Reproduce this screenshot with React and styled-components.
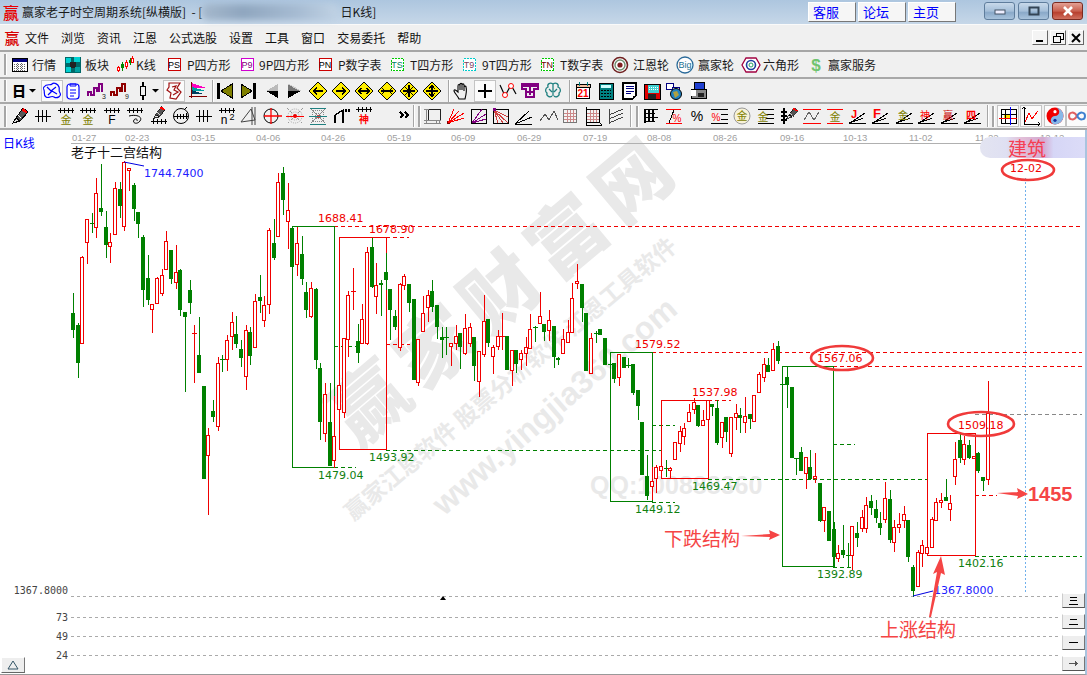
import React from 'react';
import styled, { createGlobalStyle } from 'styled-components';

const Global = createGlobalStyle`
  html, body { margin: 0; padding: 0; background: #fff; overflow: hidden; }
  #root { width: 1087px; height: 675px; }
`;
const CJK = '"Noto Sans CJK SC", "Liberation Sans", sans-serif';

const Page = styled.div`
  width: 1087px; height: 675px; display: flex; flex-direction: column; overflow: hidden;
  font-family: ${CJK}; font-size: 12px; color: #111;
`;
const TitleBar = styled.header`
  height: 24px; flex: none; display: flex; align-items: center; padding: 0 2px;
  background: linear-gradient(180deg, #adc6df 0%, #c6d7e8 100%);
`;
const Logo = styled.span`
  width: 18px; flex: none; color: #e80000; font-size: 16px; line-height: 18px; font-weight: 500; text-align: center;
`;
const TitleText = styled.span`
  font-size: 12px; line-height: 18px; color: #1a1a1a; white-space: pre; margin-left: 2px;
`;
const Smudge = styled.span`
  width: 136px; height: 16px; flex: none; filter: blur(3px); border-radius: 7px;
  background: linear-gradient(90deg, #a5b8cc, #8fa6bf 30%, #a6bbd2 70%, #c0d2e4);
`;
const LinkGroup = styled.nav`
  margin-left: auto; display: flex; gap: 2px; margin-right: 28px;
`;
const LinkBtn = styled.a`
  width: 48px; height: 20px; box-sizing: border-box; padding-left: 4px; line-height: 18px;
  color: #0000ff; font-size: 13px; background: #f6f6f6;
  border: 1px solid; border-color: #fff #777 #777 #fff;
`;
const WinGroup = styled.div`
  display: flex; gap: 3px; margin-right: 2px; margin-top: -3px;
`;
const WinBtn = styled.button`
  width: 31px; height: 18px; padding: 0; display: flex; align-items: center; justify-content: center;
  border: 1px solid ${p => (p.$close ? '#7a2a20' : '#5f7d9c')}; border-radius: 3px;
  background: ${p => (p.$close
    ? 'linear-gradient(180deg,#e3a094 0%,#c9604f 50%,#b8402f 60%,#d0705f 100%)'
    : 'linear-gradient(180deg,#c8d9ea 0%,#a5bfd9 50%,#8aa9c9 60%,#a9c3dc 100%)')};
`;
const MenuBar = styled.div`
  height: 28px; flex: none; box-sizing: border-box; display: flex; align-items: center; padding-left: 3px;
  background: #f0f0f0; border-top: 1px solid #fafafa; border-bottom: 2px solid #a6a6a6;
`;
const MenuLogo = styled(Logo)` font-size: 15px; color: #d80000; margin-right: 4px; `;
const MenuItems = styled.div` display: flex; gap: 12px; `;
const MenuItem = styled.span` font-size: 12px; line-height: 16px; color: #111; `;
const MdiGroup = styled.div` margin-left: auto; display: flex; gap: 2px; margin-right: 3px; `;
const MdiBtn = styled.span`
  width: 16px; height: 15px; box-sizing: border-box; display: flex; align-items: center; justify-content: center;
  background: #f4f4f4; border: 1px solid; border-color: #fff #666 #666 #fff;
`;
const ToolRow = styled.div`
  height: ${p => p.$h}px; flex: none; box-sizing: border-box; display: flex; align-items: center; padding-left: 4px;
  background: #f0f0f0; border-bottom: 2px solid #a8a8a8; overflow: hidden;
`;
const Grip = styled.span`
  width: 2px; height: 21px; flex: none; background: #a6a6a6; border-right: 1px solid #fff;
  margin-left: ${p => p.$gap || 0}px;
`;
const Sep = styled.span`
  width: 1px; height: ${p => p.$h || 22}px; flex: none; background: #a6a6a6; border-right: 1px solid #fff;
  margin-left: ${p => p.$gap || 0}px;
`;
const Tool = styled.span`
  width: ${p => p.$w}px; height: 22px; flex: none; box-sizing: border-box; display: flex; align-items: center; justify-content: center;
  margin-left: ${p => p.$gap || 0}px;
  ${p => (p.$on ? 'background: #fbfbfb; border: 1px solid #c4c4c4;' : '')}
`;
const LabelTool = styled.span`
  width: ${p => p.$w}px; flex: none; display: flex; align-items: center; white-space: nowrap;
  margin-left: ${p => p.$gap || 0}px;
`;
const ToolText = styled.span`
  margin-left: ${p => p.$m}px; font-size: 12px; line-height: 16px; color: #1a1a1a;
`;
const ChartWrap = styled.main`
  position: relative; flex: 1; min-height: 0; box-sizing: border-box; background: #fff;
  border-right: 2px solid #a9c4df; border-bottom: 1px solid #999;
`;
const Canvas = styled.svg` display: block; `;
const PeriodTag = styled.span`
  position: absolute; left: 3px; top: 5px; color: #0000ff; font-size: 12px; line-height: 16px;
`;
const StudyTitle = styled.span`
  position: absolute; left: 71px; top: 13px; color: #111; font-size: 13px; line-height: 18px;
`;
const PenNote = styled.span`
  position: absolute; left: 980px; top: 7px; width: 105px; height: 21px; box-sizing: border-box; padding-left: 28px;
  border-radius: 10px 0 0 10px; color: #f53e52; font-size: 19px; line-height: 21px;
  background: linear-gradient(90deg, #e3e4f1 0%, #dfe0f2 25%, #e2bfd8 40%, #d3a9d0 60%, #d6d6f6 70%, #dcdcf8 100%);
`;
const ScaleColumn = styled.div`
  position: absolute; right: 0; top: 463px; width: 23px; display: flex; flex-direction: column; gap: 6px;
`;
const ScaleBtn = styled.span`
  height: 15px; box-sizing: border-box; display: flex; align-items: center; justify-content: center;
  background: #eeeeee; border: 1px solid; border-color: #fff #777 #555 #ccc;
`;
const TabToggle = styled.span`
  position: absolute; left: 1px; bottom: 1px; width: 24px; height: 16px; box-sizing: border-box;
  display: flex; align-items: center; justify-content: center;
  background: #eee; border: 1px solid; border-color: #fff #777 #666 #fff;
`;
const Label = styled.text`
  font-family: "DejaVu Sans", sans-serif; font-size: 11px; fill: ${p => p.$c};
`;
const AxisDate = styled.text`
  font-family: "Liberation Sans", sans-serif; font-size: 9.5px; fill: #a0a0a0;
`;
const ScaleText = styled.text`
  font-family: "DejaVu Sans Mono", monospace; font-size: 10px; fill: #444; text-anchor: end;
`;
const Note = styled.text`
  font-family: ${CJK}; font-size: 19px; fill: #f54545;
`;
const BigFigure = styled.text`
  font-family: "Liberation Sans", sans-serif; font-size: 20px; font-weight: 700; fill: #f54545;
`;
const WaterBig = styled.text`
  font-family: ${CJK}; font-weight: 900; font-size: 76px; fill: #e9e9e9;
`;
const WaterSmall = styled.text`
  font-family: ${p => (p.$latin ? '"Liberation Sans", sans-serif' : CJK)};
  font-weight: 700; font-size: ${p => p.$s}px; fill: #e9e9e9;
`;
const IconSvg = styled.svg` display: block; flex: none; `;
const IconText = styled.text`
  font-family: ${p => (p.$latin ? '"Liberation Sans", sans-serif' : CJK)};
  font-size: ${p => p.$s}px; font-weight: ${p => p.$b || 400}; fill: ${p => p.$c}; text-anchor: middle;
`;

/* ---------- icon drawing helpers ---------- */
const L = ({ p, c = '#000', w = 1, d }) => <path d={p} stroke={c} strokeWidth={w} fill="none" strokeDasharray={d} />;
const T = ({ x = 10, y = 14, s = 10, c = '#000', b, latin, t }) => <IconText x={x} y={y} $s={s} $c={c} $b={b} $latin={latin}>{t}</IconText>;
const Ticks = ({ y = 4, x0 = 2, x1 = 18, xs = [4, 8, 12, 16], len = 5, c = '#000' }) => (
  <L c={c} p={`M${x0} ${y + 2.5}H${x1} ${xs.map(x => `M${x + .5} ${y}v${len}`).join(' ')}`} />
);
const Fan = ({ c = '#000' }) => <L c={c} p="M1 17.5H18 M2 17L17 7 M1 17L15 12.5" />;
const Diamond = ({ children }) => (
  <>
    <path d="M10 1L19 10L10 19L1 10Z" fill="#ffee00" stroke="#000" strokeWidth="1" />
    {children}
  </>
);
const Web = ({ c = '#d04040', l = '#888' }) => (
  <>
    <L c={l} p="M3 3L17 17M17 3L3 17" />
    <rect x="4.5" y="4.5" width="11" height="11" fill="none" stroke={l} strokeDasharray="1 1" />
    <rect x="7.5" y="7.5" width="5" height="5" fill="none" stroke={l} strokeDasharray="1 1" />
    <rect x="9" y="9" width="3" height="3" fill={c} />
  </>
);
const Crayon = () => (
  <>
    <path d="M6 12L13 2L18 6L10 15Z" fill="#555" stroke="#000" />
    <path d="M13 2L18 6L16 7L11 4Z" fill="#f00" />
    <path d="M6 12L3 17L10 15Z" fill="#ddd" stroke="#000" />
    <path d="M7 8L11 12" stroke="#fff" />
  </>
);

const ICONS = {
  table: <><rect x="2.5" y="3.5" width="15" height="13" fill="#fff" stroke="#000" /><rect x="3" y="4" width="14" height="3" fill="#000080" /><L c="#666" d="1 1" p="M4 9.5H16M4 11.5H16M4 13.5H16M4 15H16M7.5 8V16M11.5 8V16" /></>,
  blocks: <><rect x="2" y="2" width="16" height="16" fill="#006868" /><rect x="3" y="3" width="5" height="5" fill="#00d0d0" /><rect x="11" y="2" width="6" height="5" fill="#00d0d0" /><rect x="7" y="7" width="6" height="6" fill="#222" /><rect x="3" y="12" width="5" height="5" fill="#00d0d0" /><rect x="12" y="12" width="5" height="5" fill="#00a0a0" /></>,
  kline: <><L c="#f00" p="M3.5 11v6M11.5 5v9M17.5 1v7" /><rect x="2.5" y="12.5" width="2" height="3" fill="#fff" stroke="#f00" /><rect x="6" y="9" width="3" height="4" fill="#080" /><L c="#080" p="M7.5 7v9" /><rect x="10.5" y="7.5" width="2" height="4" fill="#fff" stroke="#f00" /><rect x="14" y="5" width="3" height="3" fill="#080" /><L c="#080" p="M15.5 3v7" /><rect x="16.5" y="3.5" width="2" height="4" fill="#fff" stroke="#f00" /></>,
  ps: <><rect x="4.5" y="3.5" width="12" height="12" fill="#fff" stroke="#c00" /><T y={13} s={9} latin t="PS" /></>,
  p9: <><rect x="4.5" y="3.5" width="12" height="12" fill="#fff" stroke="#d000d0" /><T y={13} s={9} c="#800080" latin t="P9" /></>,
  pn: <><rect x="4.5" y="3.5" width="12" height="12" fill="#fff" stroke="#c00" /><T y={13} s={9} latin t="PN" /></>,
  ts: <><rect x="4.5" y="3.5" width="12" height="12" fill="#fff" stroke="#0c0" strokeDasharray="2 1" /><T y={13} s={9} c="#008060" latin t="TS" /></>,
  t9: <><rect x="4.5" y="3.5" width="12" height="12" fill="#fff" stroke="#0cc" strokeDasharray="2 1" /><T y={13} s={9} c="#804060" latin t="T9" /></>,
  tn: <><rect x="4.5" y="3.5" width="12" height="12" fill="#fff" stroke="#0c0" strokeDasharray="2 1" /><T y={13} s={9} c="#700000" latin t="TN" /></>,
  wheel: <g shapeRendering="geometricPrecision"><circle cx="10" cy="10" r="7.5" fill="#fff" stroke="#702020" strokeWidth="1.6" /><circle cx="10" cy="10" r="5" fill="none" stroke="#709070" strokeWidth="1.4" /><circle cx="10" cy="10" r="2.6" fill="#802020" /></g>,
  big: <g shapeRendering="geometricPrecision"><circle cx="10" cy="10" r="8" fill="#fff" stroke="#2a6a9a" strokeWidth="1.3" /><T y={13} s={9} c="#207090" latin t="Big" /></g>,
  hex: <g shapeRendering="geometricPrecision"><path d="M5 3H15L19 10L15 17H5L1 10Z" fill="#fff" stroke="#a00040" strokeWidth="1.3" /><circle cx="10" cy="10" r="4.5" fill="none" stroke="#2040a0" strokeWidth="1.6" /><circle cx="10" cy="10" r="2" fill="none" stroke="#20a060" /></g>,
  dollar: <T y={16} s={17} b={900} c="#6fc46f" latin t="$" />,
  day: <T y={15} s={14} b={900} t="日" />,
  net: <g shapeRendering="geometricPrecision"><L c="#0000ff" w={1.2} p="M2 6C5 2 8 5 10 3S16 3 17 6S16 9 18 12S15 18 12 16S7 18 4 16S3 11 2 9S1 7 2 6ZM5 6L9 10L14 6M6 14L10 10L15 13" /></g>,
  clip: <g shapeRendering="geometricPrecision"><rect x="4" y="3" width="12" height="15" rx="3" fill="#fff" stroke="#0000ff" strokeWidth="1.2" /><L c="#0000ff" p="M7 3h6v2H7ZM7 9H13M7 12H13M7 15H11" /></g>,
  w3: <><L c="#800080" w={1.4} p="M1 15V11H4V14H7V7H10V10H12V3H15V11" /><T x={17} y={18} s={7} c="#222" latin t="3" /></>,
  w9: <><L c="#900000" w={1.4} p="M1 15V11H4V14H7V7H10V10H12V3H15V11" /><T x={17} y={18} s={7} c="#222" latin t="9" /></>,
  candle: <L w={1.3} p="M10 1V5M7.5 5.5H12.5V14.5H7.5ZM10 15V19" />,
  net2: <g shapeRendering="geometricPrecision"><L c="#a01010" w={1.2} p="M5 2H16L13 7L17 11L12 18L6 17L7 12L3 9L5 6ZM8 6L12 5L10 9L14 11L9 14" /></g>,
  flag: <><path d="M4 2L18 7H4Z" fill="#ff00c0" /><path d="M4 6L18 10H4Z" fill="#00a0a0" /><path d="M4 9L15 13H4Z" fill="#004060" /><L c="#800000" p="M3.5 1V17M1 15.5H19" /></>,
  first: <><rect x="2" y="2" width="3" height="16" fill="#000" /><path d="M17 3V17L6 10Z" fill="#808000" stroke="#000" /></>,
  last: <><rect x="15" y="2" width="3" height="16" fill="#000" /><path d="M3 3V17L14 10Z" fill="#808000" stroke="#000" /></>,
  left: <><path d="M17 3V10H5Z" fill="#bbb" /><path d="M17 10V17L5 10Z" fill="#000" /></>,
  right: <><path d="M3 3V10H16Z" fill="#777" /><path d="M3 10V17L16 10Z" fill="#000" /><path d="M3 3L16 10" stroke="#ccc" /></>,
  dL: <Diamond><L p="M5 10H15M5.5 10L9 6.5M5.5 10L9 13.5" w={1.3} /></Diamond>,
  dR: <Diamond><L p="M5 10H15M14.5 10L11 6.5M14.5 10L11 13.5" w={1.3} /></Diamond>,
  dLR: <Diamond><L p="M4 10H16M4.5 10L8 7M4.5 10L8 13M15.5 10L12 7M15.5 10L12 13" w={1.3} /></Diamond>,
  dX: <Diamond><L p="M4 10H16M8 10L5 7M8 10L5 13M12 10L15 7M12 10L15 13" w={1.3} /></Diamond>,
  dAll: <Diamond><L p="M4 10H16M10 4V16M6 6L14 14M14 6L6 14" w={1.2} /></Diamond>,
  dUD: <Diamond><L p="M4 10H16M10 4V16M10 4.5L7 8M10 4.5L13 8M10 15.5L7 12M10 15.5L13 12" w={1.2} /></Diamond>,
  hand: <g shapeRendering="geometricPrecision"><L w={1.1} p="M7 18C6 15 3 13 2 10C2 8 4 9 6 11V5C6 3 8 3 8 5V9V3.5C8 2 10 2 10 3.5V9V4C10 2.5 12 2.5 12 4V10V6C12 4.8 14 4.8 14 6C15 9 14 14 13 18Z" /></g>,
  cross: <L w={1.2} p="M10 3V17M3 10H17" />,
  vn: <g shapeRendering="geometricPrecision"><L w={1.2} p="M2 4L7 15L13 4L18 13" /><circle cx="7" cy="14" r="2.5" stroke="#f00" fill="#fff" /><circle cx="13" cy="5" r="2.5" stroke="#f00" fill="#fff" /></g>,
  gift: <L c="#800080" w={1.6} p="M2 3H18V8H14V16H6V8H2ZM2 5H18M10 5V14M7 11H13" />,
  brain: <g shapeRendering="geometricPrecision"><L c="#208080" w={1.3} p="M10 3C7 1 4 3 5 6C2 7 2 11 4 12C3 15 7 17 9 15M10 3C13 1 16 3 15 6C18 7 18 11 16 12C17 15 13 17 11 15M10 3V15M6 8L9 11M14 8L11 11" /></g>,
  cal: <><rect x="3.5" y="4.5" width="13" height="13" fill="#fff" stroke="#000" /><rect x="3" y="3" width="14" height="3" fill="#f8c0a0" stroke="#000" /><L c="#008080" p="M6 1V5M14 1V5" /><T y={16} s={10} c="#f00" latin b={700} t="21" /></>,
  calc: <><rect x="3" y="2" width="14" height="16" fill="#008080" stroke="#000" /><rect x="5" y="4" width="10" height="3" fill="#cff" /><L c="#000" d="2 1" p="M5 9.5H15M5 12.5H15M5 15.5H15" /></>,
  book: <><path d="M4 2H17V15L14 18H4Z" fill="#fff" stroke="#000" strokeWidth="1.4" /><L c="#000080" p="M7 5H15M7 7.5H15M7 10H15M7 12.5H12" /><L c="#000" p="M14 18V15H17" /></>,
  floppy: <><rect x="2" y="3" width="16" height="15" fill="#e00000" stroke="#000" /><rect x="6" y="4" width="11" height="8" fill="#40d0d0" /><rect x="6" y="13" width="8" height="5" fill="#222" /><L c="#fff" d="1 1" p="M7 6H16M7 8H16" /></>,
  globe: <><rect x="2" y="2" width="7" height="6" fill="#fff" stroke="#000080" /><rect x="8" y="6" width="7" height="5" fill="#fff" stroke="#000080" /><g shapeRendering="geometricPrecision"><circle cx="12" cy="13" r="5.5" fill="#2080c0" stroke="#000" /><path d="M9 11L13 10L15 14L11 17Z" fill="#b0a040" /></g></>,
  print: <><rect x="6" y="1" width="10" height="9" fill="#2040d0" stroke="#000" /><rect x="3" y="8" width="15" height="9" fill="#888" stroke="#000" /><rect x="3" y="9" width="5" height="6" fill="#fff" /><rect x="10" y="12" width="6" height="4" fill="#222" /></>,
  pen: <Crayon />,
  t4: <L p="M2 10.5H18M5.5 4V16M9.5 4V16M13.5 4V16" />,
  tGold: <><Ticks y={2} /><T y={18} s={11} c="#808000" t="金" /></>,
  tGold2: <><Ticks y={2} /><T y={18} s={11} c="#808000" t="金" /></>,
  tF: <><Ticks y={2} /><T y={18} s={12} latin t="F" /></>,
  tSpiral: <><Ticks y={2} /><g shapeRendering="geometricPrecision"><L p="M4 10C12 8 18 11 15 15C12 19 7 17 9 14C10 12 13 13 12 15" /></g></>,
  penT: <><g transform="translate(2 -1) scale(.8)"><Crayon /></g><Ticks y={13} /></>,
  tCircle: <g shapeRendering="geometricPrecision"><circle cx="10" cy="10" r="7.5" fill="none" stroke="#000" /><L p="M3 10.5H17M6.5 8V13M9.5 8V13M12.5 8V13M15.5 7V13M13 4L16 1" /></g>,
  tN2: <><Ticks y={2} /><T x={7} y={18} s={12} latin t="n" /><T x={15} y={14} s={9} latin t="2" /></>,
  tri: <g shapeRendering="geometricPrecision"><L c="#444" p="M2 16L12 3L16 14ZM13 1V19M16 1V19" /></g>,
  crossC: <g shapeRendering="geometricPrecision"><circle cx="8" cy="10" r="7" fill="none" stroke="#000" /><L c="#f00" w={1.3} p="M1 10H19M8 2V18" /></g>,
  web: <><L c="#999" d="1 1" p="M2 2L18 18M18 2L2 18" /><g shapeRendering="geometricPrecision"><circle cx="10" cy="10" r="7" fill="none" stroke="#aaa" strokeDasharray="1 1" /><circle cx="10" cy="10" r="4" fill="none" stroke="#aaa" strokeDasharray="1 1" /><circle cx="10" cy="10" r="2" fill="#e00000" /></g><L c="#f00" p="M1 10H19" /></>,
  webBox: <><Web /><L c="#208080" p="M2 2H18M2 18H18M1 10H19" /></>,
  nq: <L w={1.3} p="M3 17V9L11 4V17M14 3V6M17 3V6" />,
  tShen: <><Ticks y={1} /><T y={17} s={10} c="#f00" b={700} t="神" /></>,
  more: <L w={1.6} p="M6 6L9 9L6 12M11 6L14 9L11 12" />,
  boxL: <><rect x="5.5" y="3.5" width="12" height="11" fill="none" stroke="#222" /><L c="#888" p="M1 3.5H6M1 14.5H18M3.5 3V18M13.5 14V18M16.5 14V18M1 17.5H18" /></>,
  fanR: <><rect x="1" y="15" width="3" height="3" fill="#800000" /><L c="#f00" p="M2 17L8 3M2 17L13 5M2 17L18 7M2 17L18 12" /></>,
  boxP: <><rect x="2.5" y="3.5" width="15" height="14" fill="none" stroke="#000" /><L c="#800080" p="M3 17L13 3M3 17L17 8M3 17L17 13M3 15L8 15" /></>,
  boxR: <><rect x="2.5" y="3.5" width="15" height="14" fill="none" stroke="#000" /><L c="#d04040" p="M3 4L17 17M3 4L12 17M3 4L17 11M3 4L7 17" /><rect x="2" y="2" width="3" height="3" fill="#800080" /></>,
  fanK: <L w={1} p="M1 18H18M1 18L15 5M1 18L18 11" />,
  wave: <L c="#555" p="M1 15L6 8L10 14L15 5L19 14" />,
  gridR: <><rect x="3.5" y="3.5" width="13" height="13" fill="#f4f4f4" stroke="#777" /><L c="#c88" p="M7 4V16M10 4V16M13 4V16M4 7H16M4 10H16M4 13H16" /></>,
  gridA: <><rect x="3.5" y="3.5" width="13" height="13" fill="#f4f4f4" stroke="#000" /><L c="#c88" p="M7 4V16M10 4V16M13 4V16M4 7H16M4 10H16M4 13H16" /><L p="M3 1V19H19M16 16L19 19" /></>,
  slant: <L c="#444" p="M3 3V18M3 9L17 3M3 13L17 7M3 17L17 11" />,
  tList: <L w={1.2} p="M4 3V17M3 3.5H17M3 7.5H14M3 11.5H17M3 15.5H14M8 3V16M12 3V16" />,
  pctLine: <><L c="#f00" p="M2 3.5H17M2 17.5H18" /><L p="M5 17L10 4" /><T x={13} y={16} s={10} c="#f00" latin t="%" /></>,
  pct: <T y={15} s={14} latin t="%" />,
  pctR: <><L p="M1 3.5H18M1 17.5H18M11 8H18M11 13H18" /><T x={6} y={15} s={10} c="#f00" latin t="%" /></>,
  goldC: <g shapeRendering="geometricPrecision"><circle cx="10" cy="10" r="8" fill="#f7f2d8" stroke="#999" /><T y={14} s={11} c="#808000" t="金" /></g>,
  goldL: <><L p="M2 3.5H18M10 8.5H18M10 12.5H18M2 17.5H18" /><T x={7} y={15} s={11} c="#808000" t="金" /></>,
  penL: <><L w={1.4} p="M5 2V18M2 6H8M2 10H8M2 14H8" /><g transform="translate(5 0) scale(.75)"><Crayon /></g></>,
  waveL: <><L c="#f00" p="M1 3.5H19M1 17.5H19" /><L c="#666" p="M2 14L7 6L12 14L17 6" /></>,
  goldR: <><L c="#f00" p="M2 3.5H18M2 17.5H18" /><T y={15} s={11} c="#808000" t="金" /></>,
  fJ: <><Fan /><T x={6} y={12} s={11} c="#f00" b={700} latin t="J" /></>,
  fF: <><Fan /><T x={6} y={12} s={13} c="#f00" b={900} latin t="F" /></>,
  fGold: <><Fan /><T x={8} y={13} s={10} c="#808000" t="金" /></>,
  fShen: <><Fan /><T x={8} y={13} s={10} c="#f00" t="神" /></>,
  fYing: <><Fan /><T x={8} y={13} s={10} c="#c00" t="赢" /></>,
  fSi: <><Fan /><T x={8} y={13} s={10} c="#f00" b={700} t="四" /></>,
  gridY: <><rect x="6" y="8" width="7" height="5" fill="#ffe000" /><L p="M3 3.5H18V17.5H3ZM3 8.5H18M7.5 3V18" /><L c="#f00" p="M1 12.5H19" /><L c="#00f" p="M12.5 1V19" /></>,
  chart: <><L p="M3 1V18H19M1 3L3 1L5 3M17 16L19 18L17 20" /><L c="#f00" p="M4 16L8 7L11 13L17 5" /></>,
  yin: <g shapeRendering="geometricPrecision"><circle cx="10" cy="10" r="8.5" fill="#f00000" /><path d="M10 1.5A8.5 8.5 0 0 1 10 18.5A4.25 4.25 0 0 1 10 10A4.25 4.25 0 0 0 10 1.5Z" fill="#88b8e8" /><circle cx="10" cy="5.7" r="1.6" fill="#fff" /><circle cx="10" cy="14.3" r="1.6" fill="#1030a0" /></g>,
  inf: <g shapeRendering="geometricPrecision"><L c="#e06060" w={2} p="M10 10C7 5 2 6 2 10S7 15 10 10" /><L c="#4080d0" w={2} p="M10 10C13 15 18 14 18 10S13 5 10 10" /></g>,
};
const Icon = ({ name }) => (
  <IconSvg width="20" height="20" viewBox="0 0 20 20" fill="none" shapeRendering="crispEdges">{ICONS[name]}</IconSvg>
);
const Caret = () => (
  <IconSvg width="8" height="4" viewBox="0 0 8 4"><path d="M0 0H7L3.5 3.5Z" fill="#000" /></IconSvg>
);

const ROW1 = [
  ['table', 19, '行情', 31], ['blocks', 72, '板块', 84], ['kline', 124, 'K线', 135], ['ps', 173, 'P四方形', 186],
  ['p9', 246, '9P四方形', 258], ['pn', 324, 'P数字表', 337], ['ts', 396, 'T四方形', 409], ['t9', 468, '9T四方形', 481],
  ['tn', 546, 'T数字表', 559], ['wheel', 619, '江恩轮', 632], ['big', 684, '赢家轮', 697], ['hex', 750, '六角形', 762],
  ['dollar', 815, '赢家服务', 827],
];
const ROW2 = [
  ['day', 18], ['drop', 32], ['net', 51, 1], ['clip', 72], ['w3', 96], ['w9', 119], ['candle', 142], ['drop', 155],
  ['net2', 173, 1], ['flag', 197], ['sep', 211], ['first', 224], ['last', 247], ['left', 270], ['right', 294], ['dL', 317],
  ['dR', 340], ['dLR', 363], ['dX', 386], ['dAll', 408], ['dUD', 431], ['sep', 447], ['hand', 461], ['cross', 484, 1],
  ['vn', 507], ['gift', 529], ['brain', 552], ['sep', 568], ['cal', 582], ['calc', 605], ['book', 628], ['floppy', 651],
  ['globe', 673], ['print', 697],
];
const ROW3 = [
  ['pen', 19], ['t4', 42], ['tGold', 65], ['tGold2', 87], ['tF', 111], ['tSpiral', 134], ['penT', 158], ['tCircle', 180],
  ['t4', 203], ['tN2', 226], ['tri', 248], ['crossC', 272], ['web', 294], ['webBox', 317], ['nq', 341], ['tShen', 363],
  ['more', 403], ['sep', 412], ['grip', 417], ['boxL', 431], ['fanR', 454], ['boxP', 477], ['boxR', 499], ['fanK', 522],
  ['wave', 547], ['gridR', 568], ['gridA', 591], ['slant', 614], ['sep', 628], ['grip', 634], ['tList', 648], ['pctLine', 671],
  ['pct', 694], ['pctR', 717], ['goldC', 739], ['goldL', 763], ['penL', 786], ['waveL', 809], ['goldR', 832], ['fJ', 855],
  ['fF', 878], ['fGold', 902], ['fShen', 924], ['fYing', 947], ['fSi', 970], ['sep', 984], ['grip', 989], ['gridY', 1004, 1],
  ['chart', 1027, 1], ['yin', 1051, 1], ['inf', 1073, 1],
];

function FlowRow({ items, h }) {
  let cursor = 6;
  return (
    <ToolRow $h={h}>
      <Grip />
      {items.map(([name, c, on], i) => {
        const w = name === 'sep' || name === 'grip' ? 2 : name === 'drop' ? 8 : 22;
        const left = name === 'sep' || name === 'grip' ? c : c - w / 2;
        const gap = Math.round(left - cursor);
        cursor = left + w;
        if (name === 'sep') return <Sep key={i} $gap={gap} />;
        if (name === 'grip') return <Grip key={i} $gap={gap} />;
        return <Tool key={i} $w={w} $gap={gap} $on={on}>{name === 'drop' ? <Caret /> : <Icon name={name} />}</Tool>;
      })}
    </ToolRow>
  );
}
function LabelRow({ items, h }) {
  return (
    <ToolRow $h={h}>
      <Grip />
      {items.map(([icon, c, text, tx], i) => {
        const next = items[i + 1] ? items[i + 1][1] : c + 100;
        return (
          <LabelTool key={icon} $w={next - c} $gap={i === 0 ? c - 10 - 6 : 0}>
            <Icon name={icon} />
            <ToolText $m={tx - (c + 10)}>{text}</ToolText>
          </LabelTool>
        );
      })}
    </ToolRow>
  );
}

/* ---------- chart data: [x, r/g, bodyTop, bodyBottom, wickTop, wickBottom] ---------- */
const R = 'r', G = 'g';
const CANDLES = [
  [73,G,313,330,293,338],[78,G,325,363,323,378],[82,R,257,343,256,343],[87,R,219,242,219,264],[92,G,223,224,213,233],
  [96,R,193,227,178,238],[101,G,208,212,164,216],[106,G,227,245,211,258],[110,R,242,246,233,263],[115,R,188,234,182,234],
  [120,G,189,206,182,218],[124,R,162,226,161,231],[129,R,168,170,168,191],[134,G,185,209,183,221],[138,G,212,224,212,238],
  [143,G,237,290,235,307],[148,G,278,300,255,305],[152,R,304,309,304,333],[157,R,278,303,277,303],[162,R,275,293,269,296],
  [166,R,241,269,231,269],[171,G,250,279,250,284],[176,R,272,282,245,289],[180,G,270,310,269,316],[185,G,312,317,312,392],
  [190,G,290,303,280,314],[194,R,333,334,325,383],[199,G,355,373,317,373],[204,G,386,479,386,479],[208,R,435,455,428,515],
  [213,G,411,417,400,422],[218,R,363,426,357,431],[222,G,359,360,355,372],[227,R,340,359,335,371],[232,R,322,336,312,350],
  [236,G,334,344,316,348],[241,G,349,358,340,367],[246,R,330,376,325,390],[250,G,332,356,327,365],[255,R,301,347,294,347],
  [260,G,297,301,275,313],[264,R,305,320,296,327],[269,R,230,304,228,314],[274,G,243,258,219,260],[278,R,182,236,173,236],
  [283,G,173,200,167,215],[288,R,210,221,183,249],[292,G,228,267,228,267],[297,R,243,264,227,276],[302,G,254,279,236,285],
  [306,G,292,310,282,318],[311,R,288,316,282,318],[316,G,289,360,288,369],[320,G,368,422,363,440],[325,R,394,433,383,442],
  [330,G,422,466,383,466],[334,R,436,460,396,468],[339,R,385,409,385,409],[344,R,338,412,338,418],[348,R,295,339,291,357],
  [353,R,291,292,268,310],[358,G,341,353,324,363],[362,R,319,343,304,343],[367,R,252,343,247,345],[372,G,247,287,238,288],
  [376,R,285,296,263,314],[381,G,283,285,280,316],[386,G,272,280,253,290],[390,G,289,310,289,340],[395,G,316,327,310,330],
  [400,R,284,347,283,351],[404,R,276,285,274,290],[409,G,284,303,284,312],[414,G,299,380,299,380],[418,R,339,382,339,386],
  [423,R,313,331,296,332],[428,R,295,307,290,322],[432,G,291,307,280,312],[437,G,305,327,305,339],[442,G,337,340,327,358],
  [446,G,337,338,327,355],[451,R,343,346,343,366],[456,R,336,343,325,350],[460,G,333,347,333,369],[465,R,328,353,314,355],
  [470,R,327,343,323,347],[474,G,337,366,337,381],[479,R,351,381,351,397],[484,R,321,354,295,357],[488,G,319,343,319,347],
  [493,R,347,356,345,374],[498,R,336,346,330,350],[502,R,336,337,313,350],[507,G,336,370,336,370],[512,R,350,370,350,386],
  [516,G,350,364,350,373],[521,R,353,359,350,370],[526,R,347,353,337,366],[530,R,329,348,314,348],[535,G,327,328,326,342],
  [540,R,316,323,292,323],[544,G,324,332,324,341],[549,R,320,330,310,341],[554,G,326,357,326,368],[558,G,358,360,357,365],
  [563,R,339,353,329,353],[568,R,332,342,320,342],[572,R,298,332,283,332],[577,R,281,283,264,289],[582,G,284,308,284,322],
  [586,G,313,371,313,371],[591,R,338,373,333,373],[596,G,333,334,331,343],[600,G,329,335,329,335],[605,G,338,365,338,365],
  [610,G,364,365,355,376],[614,G,363,379,363,383],[619,R,354,377,354,386],[624,G,357,368,357,368],[628,G,365,366,358,368],
  [633,G,364,393,364,395],[638,G,390,406,390,420],[642,G,422,475,422,475],[647,G,476,496,455,500],[652,R,481,486,467,500],
  [656,R,467,478,465,493],[661,R,466,470,465,478],[666,G,468,469,460,477],[670,R,468,470,467,478],[675,R,442,459,442,459],
  [680,R,431,443,426,452],[684,R,428,436,423,445],[689,R,412,421,404,421],[694,R,402,409,398,414],[698,G,405,426,405,427],
  [703,R,420,425,410,425],[708,R,400,419,400,419],[712,G,404,407,404,416],[717,G,408,443,400,445],[722,R,422,437,422,448],
  [726,G,417,432,417,442],[731,R,417,453,417,457],[736,R,413,417,404,430],[740,G,415,418,408,433],[745,R,416,422,397,433],
  [750,G,414,419,414,429],[754,R,395,421,395,421],[759,R,374,392,372,393],[764,R,364,377,358,382],[768,G,365,372,358,372],
  [773,R,349,370,343,370],[778,G,346,361,341,364],[782,G,384,385,367,395],[787,G,377,385,367,408],[792,G,387,458,387,458],
  [796,G,458,459,458,475],[801,G,452,471,447,471],[806,R,457,473,457,489],[810,G,467,479,450,480],[815,R,476,478,453,483],
  [820,G,483,521,483,522],[824,R,507,520,507,532],[829,G,511,541,511,541],[834,G,529,557,522,567],[838,R,553,558,545,562],
  [843,G,550,555,525,558],[848,G,555,556,543,568],[852,R,526,555,526,570],[857,G,533,538,522,547],[862,R,517,528,510,532],
  [866,R,505,528,497,533],[871,G,501,508,495,515],[876,G,509,518,500,523],[880,G,523,528,512,535],[885,R,498,519,482,523],
  [890,G,499,540,490,543],[894,R,527,542,520,552],[899,R,524,527,513,533],[904,R,514,520,506,528],[908,G,520,557,520,562],
  [913,G,567,591,565,597],[918,R,552,586,550,586],[922,R,545,553,540,567],[927,R,547,553,547,555],[932,R,519,547,517,547],
  [936,R,502,520,498,520],[941,R,500,502,493,508],[946,G,497,501,479,501],[950,R,503,509,495,521],[955,R,459,476,442,485],
  [960,G,440,458,433,463],[964,R,444,459,436,465],[969,G,445,458,440,459],[974,R,456,458,456,458],[978,G,453,471,452,473],
  [983,G,477,481,477,491],[988,R,413,479,381,485],
];
const BOXES = [
  [292.5, 226.5, 42, 241, '#008000'], [339.5, 237.5, 47, 212, '#f00000'], [610.5, 352.5, 42, 149, '#008000'],
  [661.5, 400.5, 47, 78, '#f00000'], [782.5, 366.5, 51, 200, '#008000'], [927.5, 433.5, 48, 122, '#f00000'],
];
const DASHES = [
  [334, 1082, 226, '#f00000'], [652, 1082, 352, '#f00000'], [833, 1082, 366, '#f00000'], [975, 1082, 414, '#888888'],
  [975, 1082, 556, '#008000'], [708, 927, 479, '#008000'], [386, 661, 450, '#008000'], [334, 360, 346, '#008000'],
  [334, 356, 467, '#008000'], [386, 409, 237, '#f00000'], [386, 410, 344, '#f00000'], [652, 675, 425, '#008000'],
  [652, 675, 502, '#008000'], [708, 731, 400, '#f00000'], [833, 855, 444, '#008000'], [833, 852, 567, '#008000'],
  [975, 997, 495, '#f00000'],
];
const LABELS = [
  [318, 222, '1688.41', '#f00000'], [369, 233, '1678.90', '#f00000'], [318, 479, '1479.04', '#108010'], [369, 461, '1493.92', '#108010'],
  [635, 348, '1579.52', '#f00000'], [692, 396, '1537.98', '#f00000'], [692, 490, '1469.47', '#108010'], [635, 513, '1449.12', '#108010'],
  [817, 362, '1567.06', '#f00000'], [817, 578, '1392.89', '#108010'], [958, 429, '1509.18', '#f00000'], [958, 567, '1402.16', '#108010'],
  [144, 177, '1744.7400', '#2020ff'], [934, 594, '1367.8000', '#2020ff'],
];
const DATES = [
  [72, '01-27'], [125, '02-23'], [191, '03-15'], [256, '04-06'], [321, '04-26'], [387, '05-19'], [451, '06-09'], [517, '06-29'],
  [583, '07-19'], [647, '08-08'], [713, '08-26'], [780, '09-16'], [843, '10-13'], [909, '11-02'], [975, '11-22'], [1040, '12-12'],
];

function Candle({ d: [x, k, t, b, wt, wb] }) {
  const color = k === R ? '#f00000' : '#008000';
  const doji = b - t <= 1;
  return (
    <g>
      <line x1={x + .5} x2={x + .5} y1={wt} y2={wb} stroke={color} />
      {doji
        ? <line x1={x - 2} x2={x + 3} y1={t + .5} y2={t + .5} stroke={color} />
        : k === R
          ? <rect x={x - 1.5} y={t + .5} width={3} height={b - t} fill="#fff" stroke={color} />
          : <rect x={x - 2} y={t} width={4} height={b - t} fill={color} />}
    </g>
  );
}

function Chart() {
  return (
    <Canvas width="1085" height="544" viewBox="0 130 1085 544">
      <g transform="rotate(-40 360 420)">
        <WaterBig x="340" y="440" textLength="420">赢家财富网</WaterBig>
      </g>
      <g transform="rotate(-40 352 520)">
        <WaterSmall x="352" y="522" $s={23}>赢家江恩软件 股票分析软件 江恩工具软件</WaterSmall>
      </g>
      <g transform="rotate(-41 440 512)">
        <WaterSmall x="440" y="518" $s={32} $latin>www.yingjia360.com</WaterSmall>
      </g>
      <WaterSmall x="590" y="494" $s={25} $latin>QQ:100888360</WaterSmall>

      <g shapeRendering="crispEdges">
        <line x1="71" x2="1085" y1="143.5" y2="143.5" stroke="#b0b0b0" />
        {[596.5, 617.5, 636.5, 655.5].map(y => <line key={y} x1="71" x2="1061" y1={y} y2={y} stroke="#aaa" strokeDasharray="3 3" />)}
        <line x1="1025.5" x2="1025.5" y1="178" y2="593" stroke="#70b0ec" strokeDasharray="2 2" />
        {DASHES.map(([a, b, y, c], i) => <line key={i} x1={a} x2={b} y1={y + .5} y2={y + .5} stroke={c} strokeDasharray="4 3" />)}
        {BOXES.map(([x, y, w, h, c], i) => <rect key={i} x={x} y={y} width={w} height={h} fill="none" stroke={c} />)}
        {CANDLES.map((d, i) => <Candle key={i} d={d} />)}
      </g>
      <path d="M124 162L144 166M913 596L933 591" stroke="#0000e0" fill="none" />
      <path d="M440 600L443 596L446 600Z" fill="#000" />

      {DATES.map(([x, t]) => <AxisDate key={t} x={x} y={141}>{t}</AxisDate>)}
      {LABELS.map(([x, y, t, c]) => <Label key={t} x={x} y={y} $c={c}>{t}</Label>)}
      <Label x="1010" y="172" $c="#f00000">12-02</Label>
      <ScaleText x="68" y="594">1367.8000</ScaleText>
      <ScaleText x="68" y="621">73</ScaleText>
      <ScaleText x="68" y="640">49</ScaleText>
      <ScaleText x="68" y="659">24</ScaleText>

      <g fill="none" stroke="#f03a3a" strokeWidth="2.6">
        <ellipse cx="1028" cy="170" rx="26" ry="10" />
        <ellipse cx="842" cy="358" rx="31" ry="12" />
        <ellipse cx="981" cy="424" rx="33" ry="12" />
      </g>
      <Note x="664" y="546">下跌结构</Note>
      <Note x="880" y="637">上涨结构</Note>
      <BigFigure x="1028" y="501">1455</BigFigure>
      <g fill="#f54545">
        <path d="M741 536L770 534L769 530L780 535L769 540L770 537Z" />
        <path d="M929 617L937 572L933 574L941 556L945 575L941 573L931 617Z" />
        <path d="M997 493L1018 492L1017 488L1028 494L1017 499L1018 496Z" />
      </g>
    </Canvas>
  );
}

export default function App() {
  return (
    <Page>
      <Global />
      <TitleBar>
        <Logo>赢</Logo>
        <TitleText>赢家老子时空周期系统[纵横版]  - [</TitleText>
        <Smudge />
        <TitleText>日K线]</TitleText>
        <LinkGroup>
          <LinkBtn>客服</LinkBtn>
          <LinkBtn>论坛</LinkBtn>
          <LinkBtn>主页</LinkBtn>
        </LinkGroup>
        <WinGroup>
          <WinBtn><svg width="12" height="8"><rect x="1" y="3" width="10" height="4" fill="#eef" stroke="#456" /></svg></WinBtn>
          <WinBtn><svg width="12" height="10"><rect x="1.5" y="1.5" width="9" height="7" fill="none" stroke="#345" strokeWidth="2" /></svg></WinBtn>
          <WinBtn $close><svg width="12" height="10"><path d="M2 1L10 9M10 1L2 9" stroke="#fff" strokeWidth="2.6" /></svg></WinBtn>
        </WinGroup>
      </TitleBar>
      <MenuBar>
        <MenuLogo>赢</MenuLogo>
        <MenuItems>
          {['文件', '浏览', '资讯', '江恩', '公式选股', '设置', '工具', '窗口', '交易委托', '帮助'].map(t => <MenuItem key={t}>{t}</MenuItem>)}
        </MenuItems>
        <MdiGroup>
          <MdiBtn><svg width="10" height="10" shapeRendering="crispEdges"><rect x="1" y="7" width="7" height="2" fill="#000" /></svg></MdiBtn>
          <MdiBtn><svg width="11" height="10" shapeRendering="crispEdges"><path d="M3.5 3V.5H10.5V6H8M.5 3.5H7.5V9.5H.5Z" stroke="#000" fill="none" /></svg></MdiBtn>
          <MdiBtn><svg width="10" height="10"><path d="M1 1L9 9M9 1L1 9" stroke="#000" strokeWidth="2" /></svg></MdiBtn>
        </MdiGroup>
      </MenuBar>
      <LabelRow items={ROW1} h={27} />
      <FlowRow items={ROW2} h={25} />
      <FlowRow items={ROW3} h={26} />
      <ChartWrap>
        <Chart />
        <PeriodTag>日K线</PeriodTag>
        <StudyTitle>老子十二宫结构</StudyTitle>
        <PenNote>建筑</PenNote>
        <ScaleColumn>
          {['M2 3H9M2 6.5H9M1 10.5H10', 'M2 4H9M1 9H10', 'M1 6.5H10', 'M1 6.5H9M7 4.5L9 6.5L7 8.5'].map((p, i) => (
            <ScaleBtn key={i}><svg width="11" height="13" shapeRendering="crispEdges"><path d={p} stroke={i === 3 ? '#555' : '#000'} fill="none" /></svg></ScaleBtn>
          ))}
        </ScaleColumn>
        <TabToggle><svg width="12" height="10"><path d="M6 1L11 9H1Z" stroke="#356" fill="none" /></svg></TabToggle>
      </ChartWrap>
    </Page>
  );
}
